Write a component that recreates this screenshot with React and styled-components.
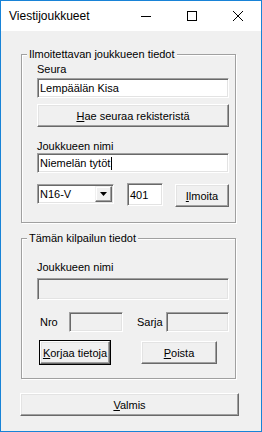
import React from 'react';
import styled, { createGlobalStyle } from 'styled-components';

const GlobalStyle = createGlobalStyle`
  html, body {
    margin: 0;
    padding: 0;
    background: #f0f0f0;
  }
  body {
    font-family: "Liberation Sans", Arial, sans-serif;
    font-size: 11px;
    color: #000;
  }
  * {
    box-sizing: border-box;
  }
`;

const Window = styled.div`
  width: 262px;
  height: 432px;
  border: 1px solid #1883d7;
  background: #f0f0f0;
  display: flex;
  flex-direction: column;
`;

const TitleBar = styled.div`
  height: 30px;
  flex-shrink: 0;
  background: #fff;
  display: flex;
  align-items: center;
`;

const Title = styled.div`
  flex: 1;
  padding-left: 8px;
  font-size: 12px;
`;

const CaptionButton = styled.div`
  width: 46px;
  height: 30px;
  display: flex;
  align-items: center;
  justify-content: center;
`;

const Body = styled.div`
  display: flex;
  flex-direction: column;
  align-items: flex-start;
  padding: 23px 0 0 20px;
`;

const Group = styled.div`
  position: relative;
  width: 215px;
  margin-top: ${p => p.$mt || 0}px;
  padding: ${p => p.$pt}px 0 ${p => p.$pb}px 15px;
  border: 1px solid #a0a0a0;
  box-shadow: 1px 1px 0 #fff, inset 1px 1px 0 #fff;
  display: flex;
  flex-direction: column;
  align-items: flex-start;
`;

// caption text sitting over the group's top border
const Legend = styled.span`
  position: absolute;
  top: -7px;
  left: 5px;
  padding: 0 2px;
  line-height: 13px;
  background: #f0f0f0;
`;

const Label = styled.div`
  line-height: 13px;
  width: ${p => (p.$w ? `${p.$w}px` : 'auto')};
  margin-top: ${p => p.$mt || 0}px;
  margin-left: ${p => p.$ml || 0}px;
`;

const TextBox = styled.div`
  width: ${p => p.$w}px;
  height: ${p => p.$h || 20}px;
  margin-top: ${p => p.$mt || 0}px;
  margin-left: ${p => p.$ml || 0}px;
  padding: 0 2px;
  background: ${p => (p.$disabled ? '#f0f0f0' : '#fff')};
  border: 1px solid;
  border-color: #a0a0a0 #fff #fff #a0a0a0;
  box-shadow: inset 1px 1px 0 #696969, inset -1px -1px 0 #e3e3e3;
  display: flex;
  align-items: center;
  white-space: nowrap;
`;

const Caret = styled.span`
  display: inline-block;
  width: 1px;
  height: 13px;
  margin-left: 1px;
  background: #000;
`;

const Combo = styled(TextBox)`
  padding: 0 1px 0 2px;
`;

const ComboText = styled.span`
  flex: 1;
`;

const ComboArrow = styled.div`
  width: 17px;
  height: 16px;
  background: #f0f0f0;
  border: 1px solid;
  border-color: #f0f0f0 #696969 #696969 #f0f0f0;
  box-shadow: inset -1px -1px 0 #a0a0a0, inset 1px 1px 0 #fff;
  display: flex;
  align-items: center;
  justify-content: center;
`;

const Row = styled.div`
  display: flex;
  align-items: ${p => p.$align || 'center'};
  margin-top: ${p => p.$mt || 0}px;
`;

const Button = styled.button`
  width: ${p => p.$w}px;
  height: 23px;
  margin-top: ${p => p.$mt || 0}px;
  margin-left: ${p => p.$ml || 0}px;
  padding: 0;
  font: inherit;
  color: #000;
  background: #f0f0f0;
  border: 1px solid;
  border-color: #fff #696969 #696969 #fff;
  box-shadow: inset -1px -1px 0 #a0a0a0, inset 1px 1px 0 #e3e3e3;
  outline: ${p => (p.$default ? '1px solid #000' : 'none')};
  cursor: default;
`;

const MinIcon = () => (
  <svg width="10" height="10" viewBox="0 0 10 10">
    <line x1="0" y1="5.5" x2="10" y2="5.5" stroke="#000" strokeWidth="1" />
  </svg>
);

const MaxIcon = () => (
  <svg width="10" height="10" viewBox="0 0 10 10">
    <rect x="0.5" y="0.5" width="9" height="9" fill="none" stroke="#000" strokeWidth="1" />
  </svg>
);

const CloseIcon = () => (
  <svg width="10" height="10" viewBox="0 0 10 10">
    <path d="M0 0 L10 10 M10 0 L0 10" stroke="#000" strokeWidth="1" />
  </svg>
);

const DownArrow = () => (
  <svg width="7" height="4" viewBox="0 0 7 4">
    <polygon points="0,0 7,0 3.5,4" fill="#000" />
  </svg>
);

const App = () => {
  return (
    <>
      <GlobalStyle />
      <Window>
        <TitleBar>
          <Title>Viestijoukkueet</Title>
          <CaptionButton><MinIcon /></CaptionButton>
          <CaptionButton><MaxIcon /></CaptionButton>
          <CaptionButton><CloseIcon /></CaptionButton>
        </TitleBar>

        <Body>
          <Group $pt={8} $pb={15}>
            <Legend>Ilmoitettavan joukkueen tiedot</Legend>
            <Label>Seura</Label>
            <TextBox $w={192} $mt={2}>Lempäälän Kisa</TextBox>
            <Button $w={192} $mt={6}><u>H</u>ae seuraa rekisteristä</Button>

            <Label $mt={13}>Joukkueen nimi</Label>
            <TextBox $w={192}>Niemelän tytöt<Caret /></TextBox>

            <Row $mt={10} $align="flex-start">
              <Combo $w={77} $mt={1}>
                <ComboText>N16-V</ComboText>
                <ComboArrow><DownArrow /></ComboArrow>
              </Combo>
              <TextBox $w={36} $h={23} $ml={13}>401</TextBox>
              <Button $w={54} $ml={12} $mt={1}><u>I</u>lmoita</Button>
            </Row>
          </Group>

          <Group $mt={15} $pt={22} $pb={14}>
            <Legend>Tämän kilpailun tiedot</Legend>
            <Label>Joukkueen nimi</Label>
            <TextBox $w={192} $h={22} $mt={4} $disabled />

            <Row $mt={12}>
              <Label $w={29} $ml={3}>Nro</Label>
              <TextBox $w={54} $disabled />
              <Label $w={29} $ml={14}>Sarja</Label>
              <TextBox $w={63} $disabled />
            </Row>

            <Row $mt={9}>
              <Button $w={70} $ml={3} $default><u>K</u>orjaa tietoja</Button>
              <Button $w={76} $ml={31}><u>P</u>oista</Button>
            </Row>
          </Group>

          <Button $w={219} $mt={14} $ml={-1}><u>V</u>almis</Button>
        </Body>
      </Window>
    </>
  );
};

export default App;
